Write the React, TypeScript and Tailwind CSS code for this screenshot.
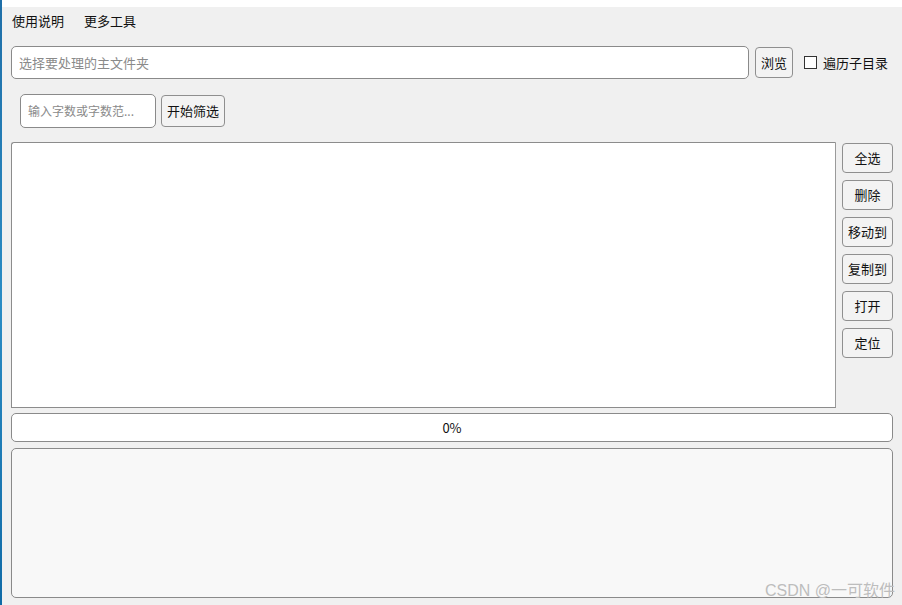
import React from "react";

const font = { fontFamily: '"Noto Sans CJK SC", "Noto Sans", sans-serif' };

function Btn({ children, className = "" }: { children: React.ReactNode; className?: string }) {
  return (
    <div
      className={
        "flex items-center justify-center rounded-[4px] border border-[#8f8f8f] bg-[#f3f3f3] text-[13px] text-[#111] " +
        className
      }
    >
      {children}
    </div>
  );
}

export default function App() {
  const side = ["全选", "删除", "移动到", "复制到", "打开", "定位"];
  return (
    <div className="relative flex h-[605px] w-[902px] overflow-hidden bg-[#f0f0f0]" style={font}>
      <div className="h-full w-[2px] bg-gradient-to-b from-[#1f6fa8] via-[#2b8cc4] to-[#0f6aa6]" />
      <div className="flex h-full flex-1 flex-col">
        <div className="h-[7px] bg-white" />
        <div className="flex h-[28px] items-center gap-[20px] pl-[10px] text-[13px] text-[#111]">
          <span>使用说明</span>
          <span>更多工具</span>
        </div>
        <div className="mt-[11px] flex items-center pl-[9px]">
          <div className="flex h-[33px] w-[738px] items-center rounded-[5px] border border-[#8a8a8a] bg-white pl-[7px] text-[13px] text-[#8a8a8a]">
            选择要处理的主文件夹
          </div>
          <Btn className="ml-[6px] h-[31px] w-[38px]">浏览</Btn>
          <div className="ml-[11px] h-[13px] w-[13px] border border-[#333] bg-white" />
          <span className="ml-[6px] text-[13px] text-[#111]">遍历子目录</span>
        </div>
        <div className="mt-[15px] flex items-center pl-[18px]">
          <div className="flex h-[34px] w-[136px] items-center rounded-[5px] border border-[#8a8a8a] bg-white pl-[7px] text-[12px] text-[#8a8a8a]">
            输入字数或字数范...
          </div>
          <Btn className="ml-[5px] h-[32px] w-[64px]">开始筛选</Btn>
        </div>
        <div className="mt-[14px] flex pl-[9px]">
          <div className="h-[266px] w-[825px] rounded-tl-[3px] border border-[#8c8c8c] border-r-[#9a9a9a] bg-white" />
          <div className="ml-[6px] flex flex-col gap-[7px] pt-[1px]">
            {side.map((s) => (
              <Btn key={s} className="h-[30px] w-[51px]">
                {s}
              </Btn>
            ))}
          </div>
        </div>
        <div className="ml-[9px] mt-[5px] flex h-[29px] w-[882px] items-center justify-center rounded-[5px] border border-[#8a8a8a] bg-white text-[13px] text-[#111]">
          0%
        </div>
        <div className="ml-[9px] mt-[6px] h-[150px] w-[882px] rounded-[5px] border border-[#8a8a8a] bg-[#f8f8f8]" />
      </div>
      <div
        className="pointer-events-none absolute bottom-[6px] right-[7px] text-[16px] leading-none text-[#bdbdbd]"
        style={{ fontFamily: '"Liberation Sans", "Noto Sans CJK SC", sans-serif' }}
      >
        CSDN @一可软件
      </div>
    </div>
  );
}
